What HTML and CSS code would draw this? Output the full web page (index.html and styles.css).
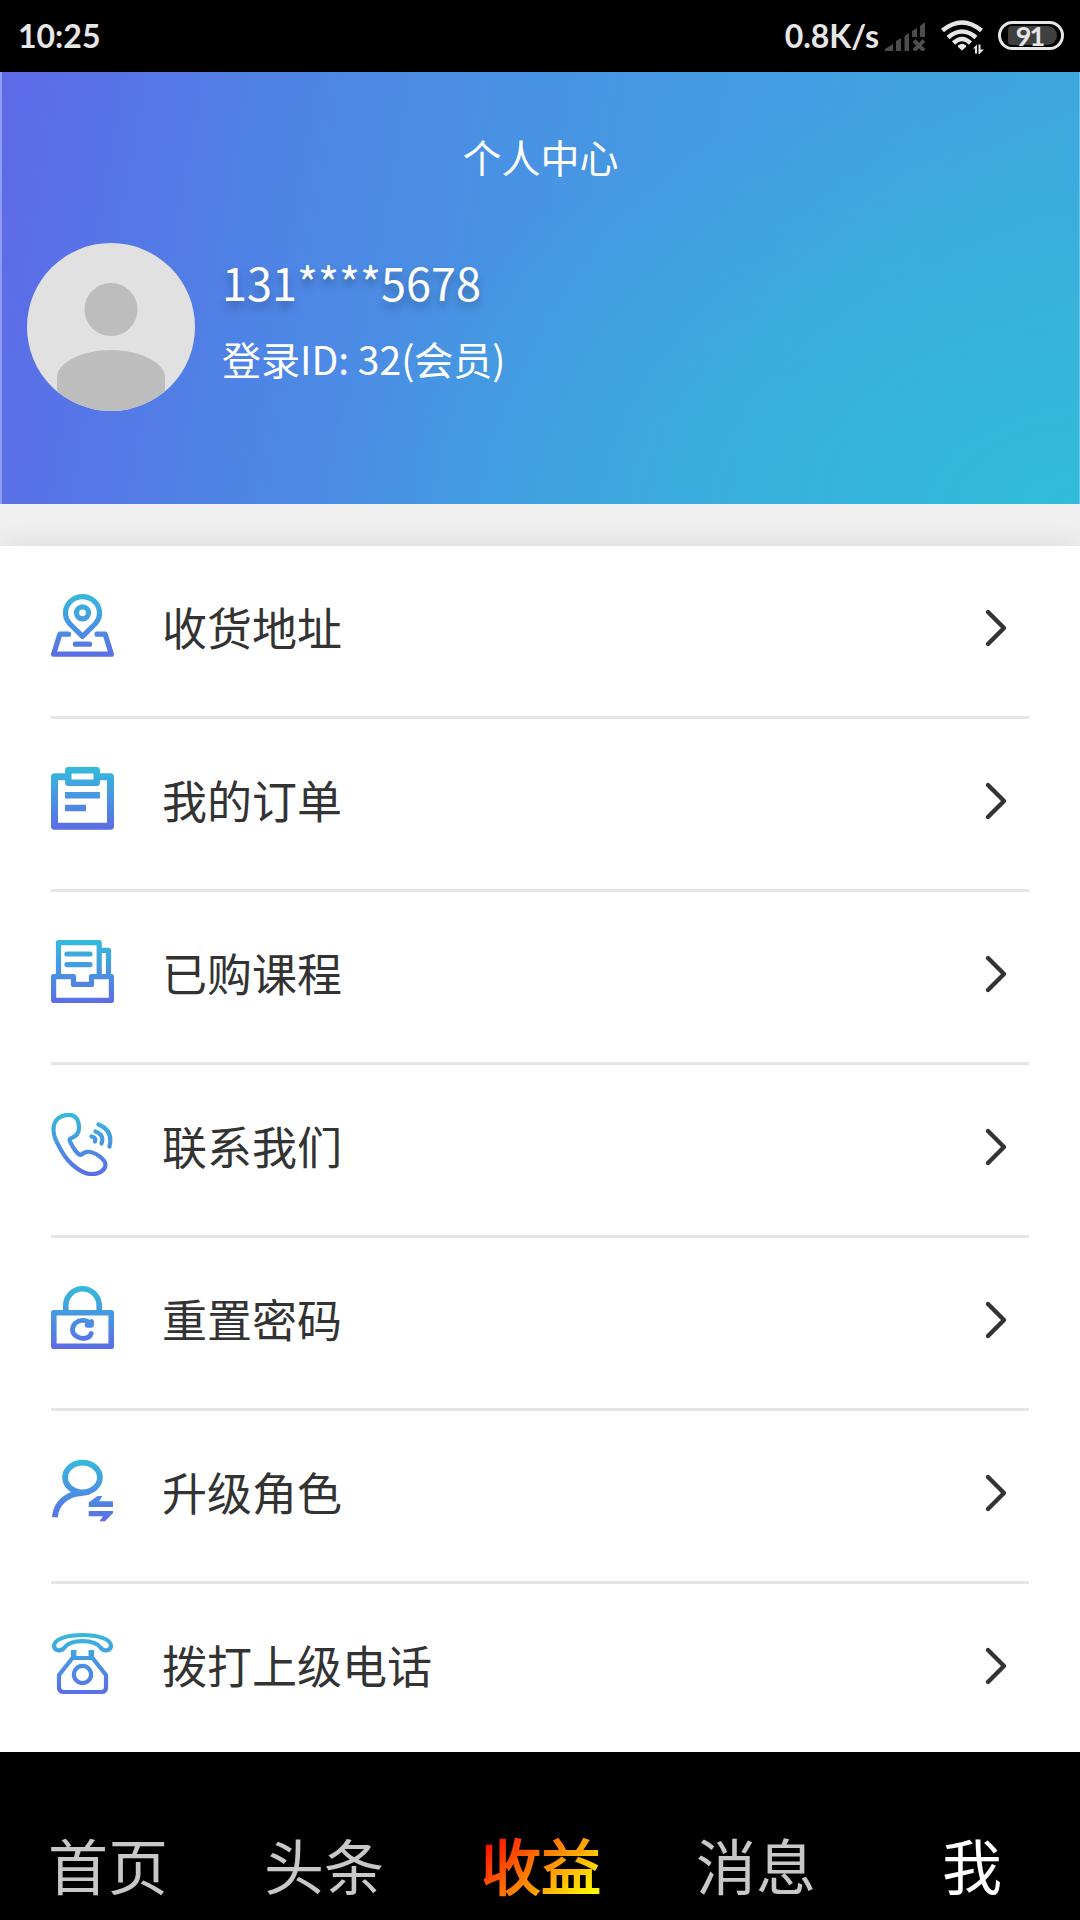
FILE: index.html
```
<!DOCTYPE html>
<html lang="zh-CN">

<head>
    <meta charset="UTF-8">
    <meta name="viewport" content="width=device-width, initial-scale=1.0">
    <title>个人中心</title>
    <link rel="stylesheet" href="styles.css">
</head>

<body>

    <div class="status">
        <span class="time">10:25</span>
        <span class="speed">0.8K/s</span>
        <svg class="signal" width="40" height="29" viewBox="0 0 40 29">
            <path d="M0 29V27L8 22V29zM11 29V19L16 16V29zM19.500 29V14L24 11V29zM27 15V9L32 6V15zM35 15V4L40 0V15z" />
            <path class="cross" d="M29 18.500L39 28.500M39 18.500L29 28.500" />
        </svg>
        <svg class="wifi" width="43" height="34" viewBox="0 0 43 34">
            <path d="M1.500 10.500Q21 -5.500 40.500 10.500M7 17.500Q21 5.500 35 17.500M12.500 23Q21 15 29.500 23" />
            <path class="fill" d="M17 25.500Q21 22 25 25.500V27L21 30.500L17 27zM32 28.500L36 24.500V33.500H34V28.500zM37.500 24.500H39.500V29.500H43L38.500 34H37.500z" />
        </svg>
        <div class="battery"><span>91</span></div>
    </div>

    <div class="header">
        <h1>个人中心</h1>
        <div class="user">
            <svg class="avatar" width="168" height="168" viewBox="0 0 168 168">
                <rect width="168" height="168" fill="#e1e1e1" />
                <circle cx="84" cy="66.500" r="26.500" fill="#bdbdbd" />
                <path d="M30 168V134C30 120 55 107 84 107S138 120 138 134V168z" fill="#bdbdbd" />
            </svg>
            <div class="info">
                <p class="phone">131****5678</p>
                <p class="uid">登录ID: 32(会员)</p>
            </div>
        </div>
    </div>

    <!-- 圖標共用的漸變 -->
    <svg class="defs" width="0" height="0">
        <defs>
            <linearGradient id="blue" gradientUnits="userSpaceOnUse" x1="0" y1="0" x2="0" y2="63">
                <stop offset="0" stop-color="#34bbdb" />
                <stop offset="0.500" stop-color="#4894e2" />
                <stop offset="1" stop-color="#5c6ce6" />
            </linearGradient>
        </defs>
    </svg>

    <ul class="menu">
        <li>
            <svg class="icon" viewBox="0 0 63 63">
                <path d="M31.500 42.300L18.500 29.500C12 22 14 12 20 7Q25 2.700 31.500 2.700T43 7C49 12 51 22 44.500 29.500z" />
                <circle cx="31.500" cy="18.800" r="6" />
                <path d="M24.500 50.200H38.500M17.500 40.200H8.800L2.600 60.200H60.400L54.200 40.200H46" />
            </svg>
            <span>收货地址</span>
            <svg class="arrow" viewBox="0 0 24 40"><path d="M4 4L20 20L4 36" /></svg>
        </li>
        <li>
            <svg class="icon" viewBox="0 0 63 63">
                <path stroke-width="7" d="M14 9.800H3.500V59.200H59.500V9.800H49" />
                <path stroke-width="6.500" d="M17.300 3.300H45.700V15.700H17.300z" />
                <path class="flat" stroke-width="6.500" d="M14 28.200H49M14 41H35" />
            </svg>
            <span>我的订单</span>
            <svg class="arrow" viewBox="0 0 24 40"><path d="M4 4L20 20L4 36" /></svg>
        </li>
        <li>
            <svg class="icon" viewBox="0 0 63 63">
                <path d="M7.500 35V2.600H48.200V35M50 10.300H57.500V35" />
                <path d="M16 14H39M16 24.600H39" />
                <path d="M2.600 36.600H22.500V44.400H40.500V36.600H60.400V60.300H2.600z" />
            </svg>
            <span>已购课程</span>
            <svg class="arrow" viewBox="0 0 24 40"><path d="M4 4L20 20L4 36" /></svg>
        </li>
        <li>
            <svg class="icon thin" viewBox="0 0 63 63">
                <path d="M18 1.800C25 1.800 28 7 28 15C28 21 25 23.500 20 25.200C18 26 18.500 27 19.500 29.500C22 34.500 25 39.500 28.500 41.800C30.500 43 31.500 39.500 36 38.800C43 38 54.500 46 54.500 52C54.500 57 48 61.200 41 61.200C32 61.200 18 52 10 37C5 28 1.800 22 2.600 15C3 6.500 10 1.800 18 1.800z" />
                <path d="M40.500 23.500Q45.500 24.500 44 28.500M44.500 18.500Q53.500 21.500 50.500 30.500M47.500 11.500Q62.500 17.500 58.500 33.500" />
            </svg>
            <span>联系我们</span>
            <svg class="arrow" viewBox="0 0 24 40"><path d="M4 4L20 20L4 36" /></svg>
        </li>
        <li>
            <svg class="icon" viewBox="0 0 63 63">
                <path stroke-width="5.600" d="M14.800 26V19.500A16.700 16.700 0 0 1 48.200 19.500V26M2.800 26.700H60.200V60.200H2.800z" />
                <path stroke-width="4.800" d="M38.500 36.500C34 33.500 28.500 33.800 24.500 37C20.500 41 20.500 46.500 24.500 49.500C30 54 38.500 53 40.200 47.500M40.500 35.500V39.300H36z" />
            </svg>
            <span>重置密码</span>
            <svg class="arrow" viewBox="0 0 24 40"><path d="M4 4L20 20L4 36" /></svg>
        </li>
        <li>
            <svg class="icon" viewBox="0 0 63 63">
                <ellipse cx="31.500" cy="18.500" rx="17.400" ry="14.800" stroke-width="5.800" />
                <path class="flat" stroke-width="5.800" d="M3.800 58.300C5 44 16 34.500 31 34L38 33" />
                <path class="solid" d="M37.700 48V43.500L46.500 37H51.500L48 42.200H62V48zM37.700 52H62V54L54 62.300H48.500L52 57.300H37.700z" />
            </svg>
            <span>升级角色</span>
            <svg class="arrow" viewBox="0 0 24 40"><path d="M4 4L20 20L4 36" /></svg>
        </li>
        <li>
            <svg class="icon thin" viewBox="0 0 63 63">
                <path d="M3 14C3 7 16 3 31.500 3C47 3 60 7 60 14C60 18.500 53 20 50 16C46 10.500 40 9.200 31.500 9.200C23 9.200 17 10.500 13 16C10 20 3 18.500 3 14z" />
                <path d="M21.500 26L8 43V55.500Q8 60 12.500 60H50.500Q55 60 55 55.500V43L41.500 26z" />
                <path class="flat" stroke-width="5.500" d="M22.700 18V27M40.300 18V27" />
                <circle cx="31.500" cy="42.500" r="8.600" />
            </svg>
            <span>拨打上级电话</span>
            <svg class="arrow" viewBox="0 0 24 40"><path d="M4 4L20 20L4 36" /></svg>
        </li>
    </ul>

    <div class="nav">
        <a>首页</a>
        <a>头条</a>
        <a><span class="income">收益</span></a>
        <a>消息</a>
        <a class="active">我</a>
    </div>

</body>

</html>
```
FILE: styles.css
```
* {
    margin: 0;
    padding: 0;
    box-sizing: border-box;
}

body {
    width: 1080px;
    height: 1920px;
    overflow: hidden;
    display: flex;
    flex-direction: column;
    background-color: #f0f0f0;
    font-family: "Noto Sans CJK SC", sans-serif;
    color: #333;
}

/* 狀態欄 */
.status {
    height: 72px;
    display: flex;
    align-items: center;
    padding: 0 16px 0 18px;
    background-color: #000;
    color: #e6e6e6;
    font-family: Lato, sans-serif;
    font-size: 32px;
    font-weight: 700;
    line-height: 74px;
}

.speed {
    margin-left: auto;
    margin-right: 6px;
}

.signal {
    fill: #4d4d4d;
    margin-right: 16px;
}

.signal .cross {
    stroke: #4d4d4d;
    stroke-width: 4;
}

.wifi {
    fill: none;
    stroke: #e6e6e6;
    stroke-width: 4.5;
    margin: 2px 14px 0 0;
}

.wifi .fill {
    fill: #e6e6e6;
    stroke: none;
}

.battery {
    width: 66px;
    height: 29px;
    border: 3px solid #e6e6e6;
    border-radius: 15px;
    padding: 2px 4px 2px 7px;
    margin-bottom: 1px;
}

.battery span {
    display: block;
    height: 19px;
    border-radius: 4px 10px 10px 4px;
    background-color: #404040;
    font-size: 27px;
    line-height: 19px;
    text-align: center;
    letter-spacing: -2px;
    padding-right: 6px;
}

/* 頭部 */
.header {
    height: 432px;
    padding: 55px 27px 0;
    color: #fff;
    background: radial-gradient(ellipse 760px 420px at 100% 100%, #31bcda 0%, rgba(49, 188, 218, .65) 35%, rgba(49, 188, 218, 0) 100%),
        linear-gradient(100deg, #5f69e8 0%, #5577e7 13%, #4d88e5 30%, #4698e2 55%, #41a3e0 80%, #3da9dd 100%);
    border-left: 2px solid #8f9bee;
    border-right: 1px solid #6cc4e6;
}

.header h1 {
    font-size: 39px;
    font-weight: 400;
    line-height: 58px;
    text-align: center;
}

.user {
    display: flex;
    margin: 58px 0 0 -2px;
}

.avatar {
    border-radius: 50%;
}

.info {
    margin-left: 27px;
    padding-top: 5px;
}

.phone {
    font-size: 45px;
    line-height: 68px;
    text-shadow: 0 6px 9px rgba(0, 0, 0, .25);
}

.uid {
    font-size: 39px;
    line-height: 58px;
    margin-top: 13px;
}

/* 列表 */
.defs {
    display: block;
}

.menu {
    height: 1206px;
    margin-top: 42px;
    padding: 0 51px;
    list-style: none;
    background-color: #fff;
    box-shadow: 0 0 30px rgba(0, 0, 0, .1);
}

.menu li {
    height: 173px;
    display: flex;
    align-items: flex-start;
    padding: 48px 21px 0 0;
    border-bottom: 3px solid #e5e5e5;
}

.menu li:last-child {
    border: 0;
}

.menu span {
    flex: 1;
    margin: -1px 0 0 48px;
    font-size: 45px;
    line-height: 68px;
}

.icon {
    width: 63px;
    height: 63px;
    fill: none;
    stroke: url(#blue);
    stroke-width: 5.2px;
    stroke-linecap: round;
    stroke-linejoin: round;
}

.thin {
    stroke-width: 4.2px;
}

.icon .flat {
    stroke-linecap: butt;
}

.icon .solid {
    fill: url(#blue);
    stroke: none;
}

.arrow {
    width: 24px;
    height: 40px;
    margin-top: 14px;
    fill: none;
    stroke: #333;
    stroke-width: 4.4px;
    stroke-linecap: round;
    stroke-linejoin: round;
}

/* 底部導航 */
.nav {
    position: relative;
    height: 168px;
    display: flex;
    padding-top: 68px;
    background-color: #000;
}

.nav a {
    flex: 1;
    text-align: center;
    font-size: 60px;
    line-height: 88px;
    color: #c8c8c8;
}

.nav .active {
    color: #fff;
}

.nav .income {
    display: inline-block;
    padding-left: 2px;
    background: linear-gradient(135deg, #f00 10%, #ff0 90%);
    -webkit-background-clip: text;
    background-clip: text;
    color: transparent;
    -webkit-text-stroke: 2px transparent;
}
```
